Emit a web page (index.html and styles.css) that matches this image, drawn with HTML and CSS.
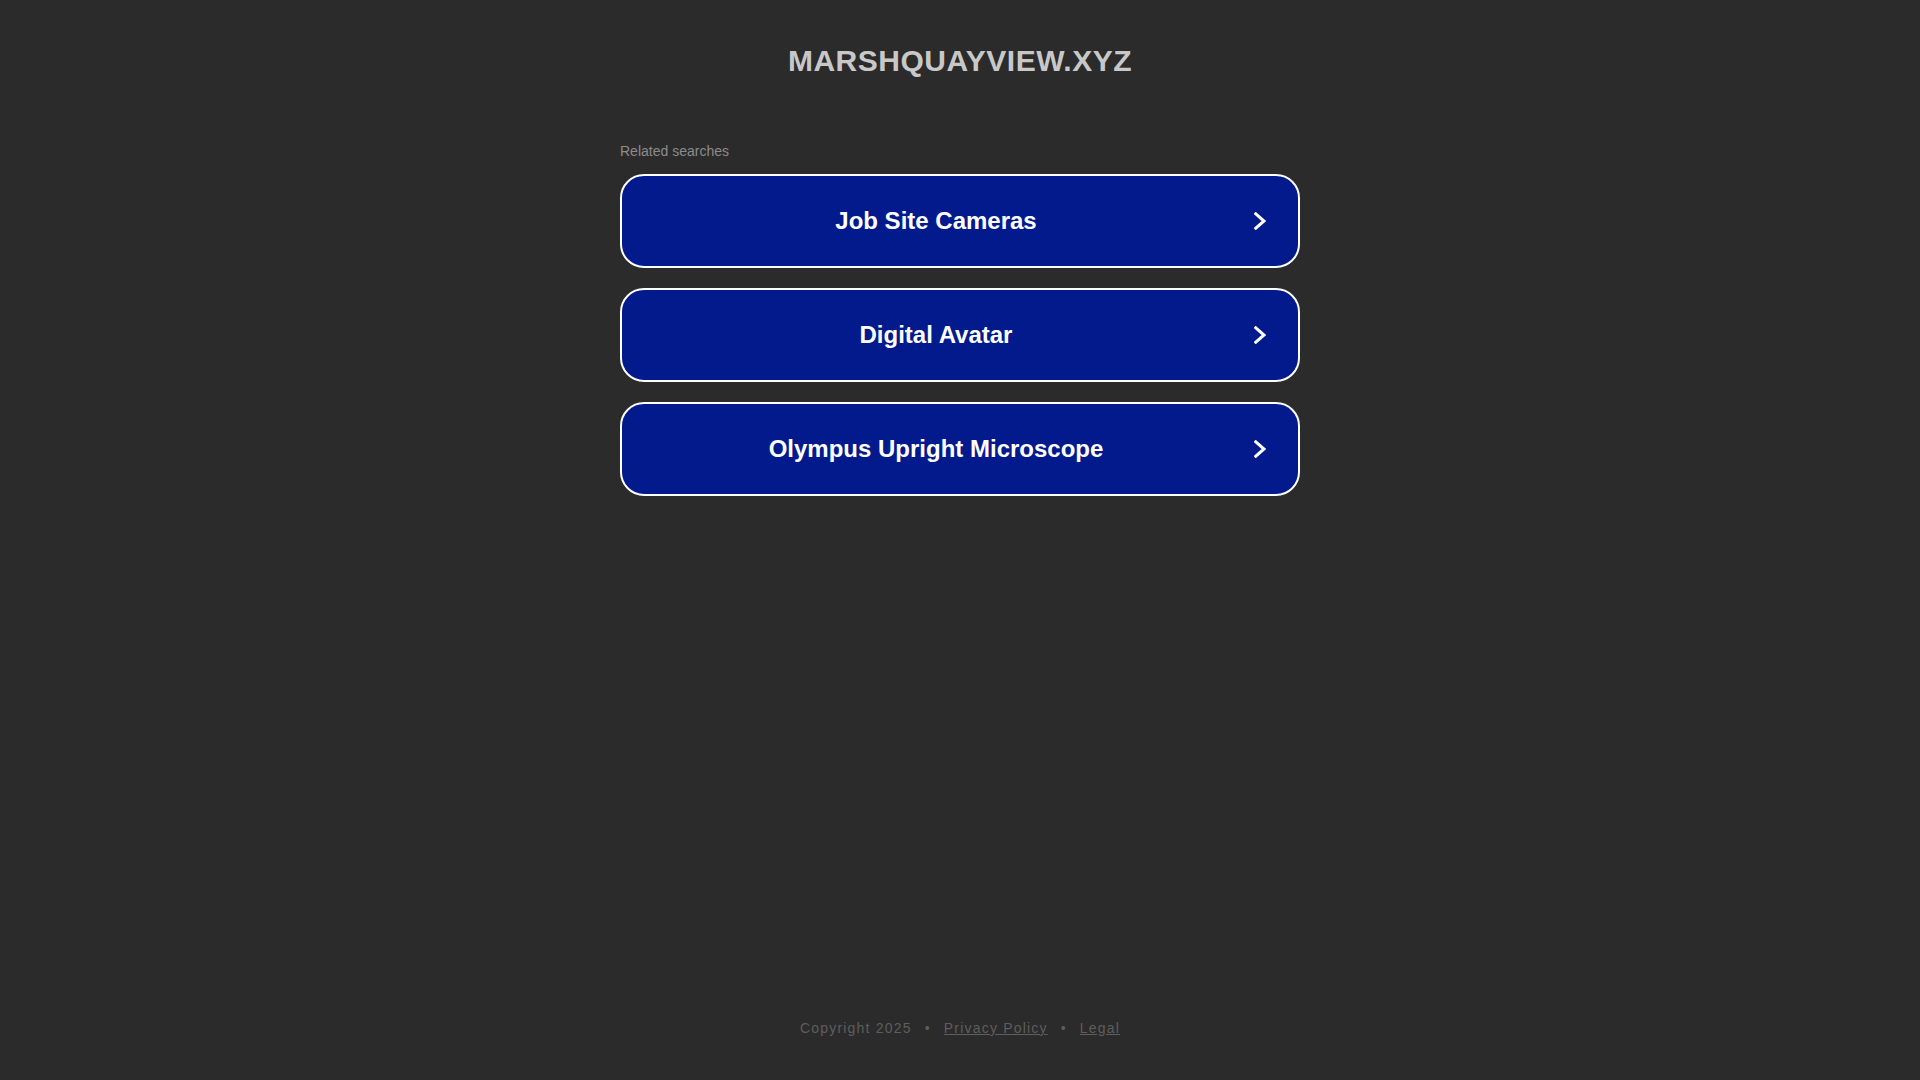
FILE: index.html
```html
<!DOCTYPE html>
<html lang="en">
<head>
<meta charset="utf-8">
<title>marshquayview.xyz</title>
<link rel="stylesheet" href="styles.css">
</head>
<body>
<div class="page">
  <main class="main">
    <h1 class="domain">MARSHQUAYVIEW.XYZ</h1>
    <section class="related">
      <div class="related-title">Related searches</div>
      <div class="links">
        <a class="link" href="#">
          <span class="label">Job Site Cameras</span>
          <svg class="chev" viewBox="0 0 12 18" width="12" height="18"><polyline points="1.8,1.8 10,9 1.8,16.2"/></svg>
        </a>
        <a class="link" href="#">
          <span class="label">Digital Avatar</span>
          <svg class="chev" viewBox="0 0 12 18" width="12" height="18"><polyline points="1.8,1.8 10,9 1.8,16.2"/></svg>
        </a>
        <a class="link" href="#">
          <span class="label">Olympus Upright Microscope</span>
          <svg class="chev" viewBox="0 0 12 18" width="12" height="18"><polyline points="1.8,1.8 10,9 1.8,16.2"/></svg>
        </a>
      </div>
    </section>
  </main>
  <footer class="footer">
    <span>Copyright 2025</span><span class="dot">•</span><a href="#">Privacy Policy</a><span class="dot">•</span><a href="#">Legal</a>
  </footer>
</div>
</body>
</html>
```

FILE: styles.css
```css
html, body {
  margin: 0;
  padding: 0;
  background: #2b2b2b;
  font-family: "Liberation Sans", Arial, sans-serif;
}

.page {
  min-height: 100vh;
  display: flex;
  flex-direction: column;
}

.main {
  flex: 1;
}

.domain {
  margin: 0;
  padding-top: 44px;
  font-size: 30px;
  line-height: 34px;
  font-weight: bold;
  letter-spacing: 0.5px;
  color: #c8c8c8;
  text-align: center;
}

.related {
  width: 680px;
  margin: 65px auto 0;
}

.related-title {
  font-size: 14px;
  line-height: 16px;
  color: #8c8c8c;
  margin-bottom: 15px;
}

.links {
  display: flex;
  flex-direction: column;
  gap: 20px;
}

.link {
  display: flex;
  align-items: center;
  box-sizing: border-box;
  height: 94px;
  border: 2px solid #ffffff;
  border-radius: 24px;
  background: #021a8b;
  color: #ffffff;
  text-decoration: none;
}

.label {
  flex: 1;
  text-align: center;
  font-size: 24px;
  font-weight: bold;
}

.chev {
  margin-left: 4px;
  margin-right: 32px;
  fill: none;
  stroke: #ffffff;
  stroke-width: 3;
  stroke-linecap: square;
  stroke-linejoin: miter;
}

.footer {
  padding-bottom: 44px;
  text-align: center;
  font-size: 14px;
  line-height: 16px;
  letter-spacing: 1.2px;
  color: #5e5e5e;
}

.footer a {
  color: #5e5e5e;
  text-decoration: underline;
}

.dot {
  padding: 0 13px;
}
```
